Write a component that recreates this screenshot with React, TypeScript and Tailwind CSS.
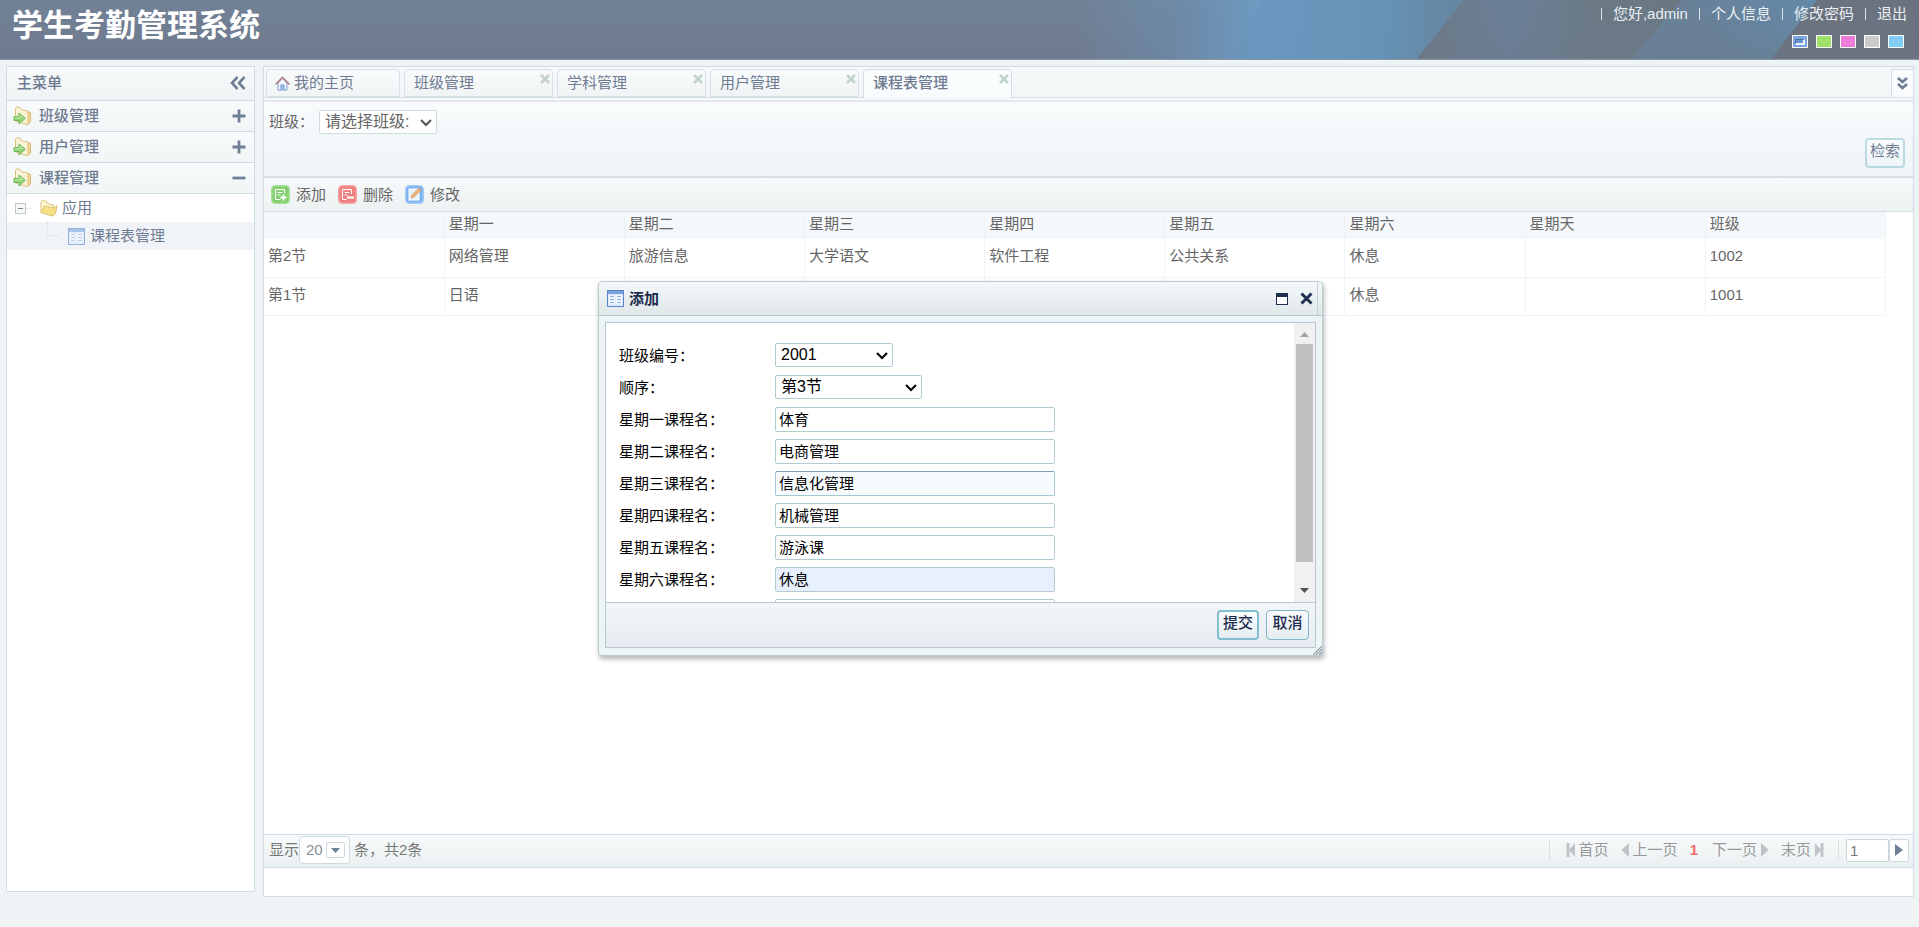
import React from "react";

const COLUMNS = ["", "星期一", "星期二", "星期三", "星期四", "星期五", "星期六", "星期天", "班级"];
const ROWS = [
  ["第2节", "网络管理", "旅游信息", "大学语文", "软件工程", "公共关系", "休息", "", "1002"],
  ["第1节", "日语", "", "", "", "", "休息", "", "1001"],
];
const FIELDS = [
  { id: "mon", label: "星期一课程名：", value: "体育", look: "bg-white border-[#b5cbd3]" },
  { id: "tue", label: "星期二课程名：", value: "电商管理", look: "bg-white border-[#b5cbd3]" },
  { id: "wed", label: "星期三课程名：", value: "信息化管理", look: "bg-[#f8fbfd] border-[#a3c8d6] border-t-[#7ba3b3]" },
  { id: "thu", label: "星期四课程名：", value: "机械管理", look: "bg-white border-[#b5cbd3]" },
  { id: "fri", label: "星期五课程名：", value: "游泳课", look: "bg-white border-[#b5cbd3]" },
  { id: "sat", label: "星期六课程名：", value: "休息", look: "bg-[#e8f0fe] border-[#b5cbd3]" },
];

function FolderArrow() {
  return (
    <svg width="20" height="20" viewBox="0 0 20 20" aria-hidden="true">
      <path d="M14 5.500l3.500 1v9.500l-3 2.500z" fill="#f3d999" stroke="#d9b878" />
      <path d="M2.500 2l1.500-1.300 3.500 1 1 2 6.500 1.300v13l-1.500.5L2.500 15z" fill="#fbf3d6" stroke="#dcc07f" />
      <path d="M1 10.500h5V7l6.300 5.300L6 18v-3.500H1z" fill="#8fd676" stroke="#6bb156" strokeWidth="0.900" />
      <path d="M2 11.800h5V9.500l3 2.500" fill="none" stroke="#c3edb3" />
    </svg>
  );
}

function FolderOpen() {
  return (
    <svg width="18" height="18" viewBox="0 0 18 18" aria-hidden="true">
      <path d="M1 13.500V2.500l1.500-1.200 4 1.200 1 2 6 1.500v3" fill="#fdf6cf" stroke="#dcc278" />
      <path d="M1 13.500l3.500-6.500 9.500 2 3-2.500-1.500 8-3 2.500z" fill="#f8e184" stroke="#dcc278" />
    </svg>
  );
}

function TableIcon({ faded = false }: { faded?: boolean }) {
  return (
    <svg width="17" height="17" viewBox="0 0 17 17" className={faded ? "shrink-0 opacity-60" : "shrink-0"} aria-hidden="true">
      <rect x="0.500" y="0.500" width="16" height="16" fill="#dceafb" stroke="#5b86c6" />
      <rect x="1" y="1" width="15" height="3" fill="#79a3e0" />
      <path d="M2 6.500h6M9 6.500h6M2 9.500h6M9 9.500h6M2 12.500h6M9 12.500h6" stroke="#fff" strokeWidth="2" />
      <path d="M3 6.500h4M10 6.500h4M3 9.500h4M10 9.500h4M3 12.500h4M10 12.500h4" stroke="#8fb2e2" />
    </svg>
  );
}

function ToolIcon({ kind }: { kind: "add" | "remove" | "edit" }) {
  const fill = kind === "add" ? "#83cf72" : kind === "remove" ? "#ef8080" : "#7db2ef";
  const edge = kind === "add" ? "#a5e096" : kind === "remove" ? "#f6a4a4" : "#a3caf6";
  return (
    <svg width="19" height="19" viewBox="0 0 19 19" aria-hidden="true">
      <rect x="0.750" y="0.750" width="17.500" height="17.500" rx="3.500" fill={fill} stroke={edge} strokeWidth="1.500" />
      {kind === "add" && (
        <>
          <path d="M13.500 8V4.500h-9v10h5" fill="none" stroke="#fff" />
          <path d="M6.500 7.500h5M6.500 10h3" stroke="#fff" />
          <path d="M9.500 12.500h6M12.500 9.500v6" stroke="#fff" strokeWidth="1.800" />
        </>
      )}
      {kind === "remove" && (
        <>
          <path d="M13.500 9V4.500h-9v10h4" fill="none" stroke="#fff" />
          <path d="M6.500 7.500h5M6.500 10h3" stroke="#fff" />
          <path d="M9 12.500h7" stroke="#fff" strokeWidth="2.200" />
        </>
      )}
      {kind === "edit" && (
        <>
          <rect x="4" y="4" width="10" height="11" fill="#e6f1fd" stroke="#fff" />
          <path d="M6 13l1-3 7-7 2 2-7 7z" fill="#f0b87c" stroke="#c98f5c" strokeWidth="0.700" />
        </>
      )}
    </svg>
  );
}

function HomeIcon() {
  return (
    <svg width="15" height="15" viewBox="0 0 15 15" aria-hidden="true">
      <path d="M3 7v7h9V7L7.500 2.500z" fill="#eef4fc" stroke="#7f9ccc" />
      <path d="M6 14V9h3v5" fill="#a9c8f0" stroke="#6d92cc" />
      <path d="M0.700 8.300L7.500 1.500l6.800 6.800" fill="none" stroke="#b9818a" strokeWidth="1.700" />
    </svg>
  );
}

function CloseX() {
  return (
    <svg width="10" height="10" viewBox="0 0 10 10" aria-hidden="true">
      <path d="M1 1l8 8M9 1L1 9" stroke="#c3d3d0" strokeWidth="2.700" />
    </svg>
  );
}

function Chevron({ color }: { color: string }) {
  return (
    <svg width="12" height="8" viewBox="0 0 12 8" className="pointer-events-none absolute right-[5px] top-[9px]" aria-hidden="true">
      <path d="M1 1l5 5 5-5" fill="none" stroke={color} strokeWidth="2" />
    </svg>
  );
}

function MenuGroup({ title, open = false }: { title: string; open?: boolean }) {
  return (
    <button className="flex h-[31px] w-full items-center border-b border-[#cfdde3] bg-linear-to-b from-[#f9fbfc] to-[#f1f5f6] pl-1.5 pr-2 font-medium text-[#6f7b91]">
      <FolderArrow />
      <span className="ml-1.5 grow text-left">{title}</span>
      <svg width="14" height="14" viewBox="0 0 14 14" aria-hidden="true">
        <path d={open ? "M0.500 7h13" : "M0.500 7h13M7 0.500v13"} stroke="#6f7f95" strokeWidth="2.800" />
      </svg>
    </button>
  );
}

function Tab({ title, active = false }: { title: string; active?: boolean }) {
  return (
    <div
      className={
        active
          ? "flex h-[31px] w-[149px] justify-between rounded-t-sm border border-b-0 border-[#d3e0e3] bg-[#f9fcfd] pl-[9px] pr-0.5 font-medium"
          : "flex h-7 w-[149px] justify-between rounded-t-sm border border-[#d6e2e5] bg-linear-to-b from-[#f9fbfc] to-[#eff4f5] pl-[9px] pr-0.5"
      }
    >
      <button className="h-[26px] leading-[26px]">{title}</button>
      <button aria-label={"关闭" + title} className="h-3.5 pt-1"><CloseX /></button>
    </div>
  );
}

function Arrow({ left = false, bar = false }: { left?: boolean; bar?: boolean }) {
  return (
    <svg width={bar ? 9 : 8} height="14" viewBox={bar ? "0 0 9 14" : "0 0 8 14"} className={left ? "rotate-180" : ""} aria-hidden="true">
      <path d={bar ? "M0 0l6 7-6 7zM5.500 0H8.500v14H5.500z" : "M0 0l7.500 7L0 14z"} fill="#c0c4c6" />
    </svg>
  );
}

function Header() {
  return (
    <header className="relative flex h-[60px] justify-between overflow-hidden border-b border-[#8896a6] bg-linear-to-b from-[#718196] to-[#6f7a8e]">
      <svg className="absolute right-0 top-0 h-full w-[920px]" viewBox="0 0 920 60" preserveAspectRatio="none" aria-hidden="true">
        <defs>
          <linearGradient id="glow" gradientUnits="userSpaceOnUse" x1="80" y1="0" x2="455" y2="40">
            <stop offset="0" stopColor="#6b9cc2" stopOpacity="0" />
            <stop offset="0.250" stopColor="#6b94b8" stopOpacity="0.450" />
            <stop offset="0.480" stopColor="#6d9bc2" />
            <stop offset="0.780" stopColor="#6796ba" />
            <stop offset="1" stopColor="#67849b" />
          </linearGradient>
          <linearGradient id="slate" x1="0" x2="1">
            <stop offset="0" stopColor="#6c7884" />
            <stop offset="0.350" stopColor="#6b8099" />
            <stop offset="0.650" stopColor="#6b7985" />
            <stop offset="1" stopColor="#6b7884" />
          </linearGradient>
          <linearGradient id="band" x1="0" x2="1">
            <stop offset="0" stopColor="#6a8399" />
            <stop offset="0.400" stopColor="#68819a" />
            <stop offset="1" stopColor="#648bab" />
          </linearGradient>
          <linearGradient id="shade" x1="0" x2="0" y1="0" y2="1">
            <stop offset="0" stopColor="#6b7b8c" stopOpacity="0" />
            <stop offset="1" stopColor="#6b7888" stopOpacity="0.400" />
          </linearGradient>
        </defs>
        <path d="M0 0H465L418 60H0z" fill="url(#glow)" />
        <path d="M264 0H465L418 60H232z" fill="#6491b4" opacity="0.250" />
        <path d="M465 0H684L632 60H418z" fill="url(#slate)" />
        <path d="M684 0H818L772 60H632z" fill="url(#band)" />
        <path d="M818 0H920V60H772z" fill="#6b717e" />
        <path d="M465 0H920V60H418z" fill="url(#shade)" />
      </svg>
      <h1 className="relative pl-3 pt-[3px] text-[31px] font-bold leading-[46px] text-white">学生考勤管理系统</h1>
      <div className="relative flex flex-col items-end pr-3 text-[#e9eef2]">
        <nav className="flex h-7 items-center gap-[11px]">
          <i className="h-3 w-px bg-[#dbe2e8]" />
          <span>您好,admin</span>
          <i className="h-3 w-px bg-[#dbe2e8]" />
          <a href="#profile">个人信息</a>
          <i className="h-3 w-px bg-[#dbe2e8]" />
          <a href="#password">修改密码</a>
          <i className="h-3 w-px bg-[#dbe2e8]" />
          <a href="#logout">退出</a>
        </nav>
        <div className="mr-[3px] flex gap-2 pt-[7px]">
          <button aria-label="蓝色" className="flex h-[13px] w-4 items-center justify-center border border-white bg-[#7ba3dd]">
            <i className="h-1.5 w-2.5 border border-b-2 border-r-2 border-[#eaf3ff] border-l-[#4c6ea8] border-t-[#4c6ea8] bg-[#6b93cf]" />
          </button>
          <button aria-label="绿色" className="h-[13px] w-4 border border-white bg-[#a1e069]" />
          <button aria-label="粉色" className="h-[13px] w-4 border border-white bg-[#ee7cd9]" />
          <button aria-label="灰色" className="h-[13px] w-4 border border-white bg-[#cbcbc9]" />
          <button aria-label="天蓝" className="h-[13px] w-4 border border-white bg-[#82cdf6]" />
        </div>
      </div>
    </header>
  );
}

function Sidebar() {
  return (
    <aside className="h-[826px] w-[249px] shrink-0 border border-[#d0dee2] bg-white">
      <div className="flex h-[34px] items-center justify-between border-b border-[#cfdde3] bg-linear-to-b from-[#f8fafb] to-[#eef3f4] pb-0.5 pl-2.5 pr-2 font-medium text-[#6f7b91]">
        主菜单
        <button aria-label="收起">
          <svg width="16" height="14" viewBox="0 0 16 14" aria-hidden="true">
            <path d="M7.500 1L2 7l5.500 6M14.500 1L9 7l5.500 6" fill="none" stroke="#6f7f95" strokeWidth="2.600" />
          </svg>
        </button>
      </div>
      <MenuGroup title="班级管理" />
      <MenuGroup title="用户管理" />
      <MenuGroup title="课程管理" open />
      <div className="flex h-7 items-center pl-2 text-[#6f7b91]">
        <button aria-label="折叠" className="flex size-[11px] items-center justify-center border border-[#c3c8cc] bg-[#f7f8f8]">
          <i className="h-px w-[5px] bg-[#777f88]" />
        </button>
        <i className="mr-2 w-1.5 border-t border-dotted border-[#d9dee1]" />
        <FolderOpen />
        <span className="ml-1">应用</span>
      </div>
      <div className="flex h-7 items-center bg-[#f0f4f9] pl-10 text-[#6f7b91]">
        <i className="mb-3.5 mr-[9px] h-3.5 w-3 border-b border-l border-dotted border-[#d9dee1]" />
        <TableIcon faded />
        <a href="#timetable" className="ml-[5px]">课程表管理</a>
      </div>
    </aside>
  );
}

function Pager() {
  return (
    <footer className="flex h-[34px] items-center justify-between border-y border-[#cfdde3] bg-linear-to-b from-[#f7fafb] to-[#eaf0f1] pb-0.5 pl-[5px] pr-1 text-[#777]">
      <div className="flex items-center">
        显示
        <button className="mr-1 flex h-7 w-[51px] items-center justify-between rounded-sm border border-[#d0dbe0] bg-white pl-1.5 pr-1 text-[#8b8f96]">
          20
          <span className="flex h-4 w-[19px] items-center justify-center rounded-xs border border-[#cfd9de]">
            <svg width="9" height="5" viewBox="0 0 9 5" aria-hidden="true"><path d="M0 0h9L4.500 5z" fill="#6f7f95" /></svg>
          </span>
        </button>
        条，共2条
      </div>
      <div className="flex items-center text-[#999]">
        <i className="mr-4 h-5 w-px bg-[#d8e0e2]" />
        <button className="flex items-center gap-1"><Arrow left bar />首页</button>
        <button className="ml-3 flex items-center gap-1"><Arrow left />上一页</button>
        <strong className="mx-3 text-[#f26a6a]">1</strong>
        <button className="ml-0.5 flex items-center gap-1">下一页<Arrow /></button>
        <button className="ml-3 flex items-center gap-1">末页<Arrow bar /></button>
        <i className="ml-3.5 mr-[7px] h-5 w-px bg-[#d8e0e2]" />
        <input aria-label="页码" defaultValue="1" className="h-[23px] w-[43px] rounded-xs border border-[#ccd3d6] bg-white px-[3px] text-[#777]" />
        <button aria-label="跳转" className="flex h-[23px] w-5 items-center justify-center rounded-xs border border-[#ccdbe0] bg-white">
          <svg width="8" height="12" viewBox="0 0 8 12" aria-hidden="true"><path d="M0 0l8 6-8 6z" fill="#6f7f95" /></svg>
        </button>
      </div>
    </footer>
  );
}

function Main() {
  return (
    <main className="flex h-[831px] min-w-0 grow flex-col border border-[#d0dee2] bg-white">
      <div className="flex h-[31px] items-start border-b border-[#d3e0e3] bg-linear-to-b from-[#f6f9fa] to-[#f2f6f7] pl-0.5 pt-0.5 text-[#6f7b91]">
        <div className="flex grow items-start gap-1">
          <button className="flex h-7 w-[134px] items-center gap-1 rounded-t-sm border border-[#d6e2e5] bg-linear-to-b from-[#f9fbfc] to-[#eff4f5] pl-2">
            <HomeIcon />我的主页
          </button>
          <Tab title="班级管理" />
          <Tab title="学科管理" />
          <Tab title="用户管理" />
          <Tab title="课程表管理" active />
        </div>
        <button aria-label="更多" className="flex h-7 w-[22px] items-center justify-center border-l border-t border-[#d3e0e3] bg-[#f9fbfc]">
          <svg width="11" height="13" viewBox="0 0 11 13" aria-hidden="true">
            <path d="M1 1l4.500 4L10 1M1 7l4.500 4L10 7" fill="none" stroke="#6f7f95" strokeWidth="2.700" />
          </svg>
        </button>
      </div>
      <div className="h-1 border-b-2 border-[#e2eaec] bg-[#f4f8f9]" />
      <section className="flex h-[74px] justify-between bg-linear-to-b from-[#f9fbfc] to-[#eff4f7] px-[5px] text-[#666]">
        <div className="flex h-10 items-center">
          <label htmlFor="class-filter" className="w-[50px]">班级：</label>
          <span className="relative">
            <select id="class-filter" className="block h-6 w-[118px] appearance-none rounded-xs border border-[#cfdde0] bg-white pl-[5px] text-base leading-5 text-[#666]">
              <option>请选择班级:</option>
            </select>
            <Chevron color="#555" />
          </span>
        </div>
        <button className="mr-[3px] mt-9 h-[30px] w-10 rounded-sm border-2 border-[#b9d9e3] bg-linear-to-b from-[#fafcfd] to-[#eef5f8] pb-1 text-[#6f7b91]">检索</button>
      </section>
      <div className="flex h-9 items-center gap-3 border-b border-t-2 border-[#d6e1e5] bg-linear-to-b from-[#f7fafa] to-[#ecf1f2] pl-[7px] text-[#666]">
        <button className="flex items-center gap-1.5"><ToolIcon kind="add" />添加</button>
        <button className="flex items-center gap-1.5"><ToolIcon kind="remove" />删除</button>
        <button className="flex items-center gap-1.5"><ToolIcon kind="edit" />修改</button>
      </div>
      <div className="grow">
        <table className="w-[1622px] table-fixed border-collapse text-left text-[#666]">
          <thead>
            <tr className="h-[27px] bg-[#f5f8fa]">
              {COLUMNS.map((c) => (
                <th key={c} className="border-r border-[#f0f3f4] px-1 pb-[3px] font-normal">{c}</th>
              ))}
            </tr>
          </thead>
          <tbody>
            {ROWS.map((row) => (
              <tr key={row[0]} className="h-[38px] border-b border-[#f1f4f5]">
                {row.map((cell, i) => (
                  <td key={COLUMNS[i]} className="border-r border-[#f1f4f5] px-1 pb-[3px]">{cell}</td>
                ))}
              </tr>
            ))}
          </tbody>
        </table>
      </div>
      <Pager />
      <div className="h-7" />
    </main>
  );
}

function Dialog() {
  return (
    <div className="pointer-events-none absolute inset-x-0 top-[281px] flex justify-center pl-0.5">
      <div role="dialog" aria-label="添加" className="pointer-events-auto relative w-[725px] rounded border border-[#b9c9cd] bg-[#edf4f6] shadow-[1px_3px_5px_rgba(0,0,0,0.3)]">
        <div className="flex h-[34px] items-center rounded-t border-b border-[#b5c9ce] bg-linear-to-b from-[#f3f8f9] to-[#e1e8ea] pl-2 pr-1 text-[#1d2c4d]">
          <TableIcon />
          <h2 className="ml-[5px] grow font-bold">添加</h2>
          <button aria-label="最大化" className="mr-3 h-3 w-3 border border-t-4 border-[#1f2f4f] bg-white" />
          <button aria-label="关闭">
            <svg width="13" height="13" viewBox="0 0 13 13" aria-hidden="true">
              <path d="M1.500 1.500l10 10M11.500 1.500l-10 10" stroke="#1f2f4f" strokeWidth="2.900" />
            </svg>
          </button>
          <i className="ml-1 h-full w-px bg-[#c3d2d6]" />
        </div>
        <div className="m-1.5 mb-[7px] border border-[#b9c6d0]">
          <div className="flex h-[279px] overflow-hidden bg-white text-black">
            <form className="grid grow auto-rows-[25px] grid-cols-[156px_1fr] content-start items-center gap-y-[7px] pl-[13px] pt-5">
              <label htmlFor="class-no">班级编号：</label>
              <span className="relative w-[118px] self-start">
                <select id="class-no" className="block h-6 w-full appearance-none rounded-xs border border-[#b5cbd3] bg-white pl-[5px] text-base leading-5">
                  <option>2001</option>
                </select>
                <Chevron color="#000" />
              </span>
              <label htmlFor="order">顺序：</label>
              <span className="relative w-[147px] self-start">
                <select id="order" className="block h-6 w-full appearance-none rounded-xs border border-[#b5cbd3] bg-white pl-[5px] text-base leading-5">
                  <option>第3节</option>
                </select>
                <Chevron color="#000" />
              </span>
              {FIELDS.map((f) => (
                <React.Fragment key={f.id}>
                  <label htmlFor={f.id}>{f.label}</label>
                  <input id={f.id} defaultValue={f.value} className={"h-[25px] w-[280px] rounded-xs border px-[3px] pb-0.5 " + f.look} />
                </React.Fragment>
              ))}
              <input id="sun" aria-label="星期天课程名" className="col-start-2 h-[25px] w-[280px] rounded-xs border border-[#b5cbd3] bg-white px-[3px] pb-0.5" />
            </form>
            <div className="flex w-[21px] shrink-0 flex-col items-center justify-between bg-[#f1f1f1] py-[9px]" aria-hidden="true">
              <svg width="9" height="5" viewBox="0 0 9 5"><path d="M0 5h9L4.500 0z" fill="#a3a3a3" /></svg>
              <div className="mb-auto mt-[7px] h-[218px] w-[17px] bg-[#c1c1c1]" />
              <svg width="9" height="5" viewBox="0 0 9 5"><path d="M0 0h9L4.500 5z" fill="#505050" /></svg>
            </div>
          </div>
          <div className="flex h-[45px] items-center justify-end gap-[7px] border-t border-[#b9c6d0] bg-linear-to-b from-[#f2f6f7] to-[#e7ecf2] pr-1.5 font-medium text-[#1d2c4d]">
            <button className="h-[30px] w-[42px] rounded-sm border-2 border-[#84bed1] bg-linear-to-b from-[#fafcfd] to-[#e4edf2] pb-1">提交</button>
            <button className="h-[30px] w-[43px] rounded-sm border border-[#84b5c8] bg-linear-to-b from-[#fafcfd] to-[#e4edf2] pb-1">取消</button>
          </div>
        </div>
        <svg className="absolute bottom-0 right-0" width="9" height="9" viewBox="0 0 9 9" aria-hidden="true">
          <path d="M0 9l9-9M3 9l6-6M6 9l3-3" stroke="#8f9ba0" strokeWidth="1.200" />
        </svg>
      </div>
    </div>
  );
}

export default function App() {
  return (
    <div className="relative min-h-screen overflow-hidden bg-[#eef4f5] font-['Liberation_Sans','Noto_Sans_CJK_SC',sans-serif] text-[15px] leading-5">
      <Header />
      <div className="flex gap-2 pl-1.5 pr-[5px] pt-1.5">
        <Sidebar />
        <Main />
      </div>
      <Dialog />
    </div>
  );
}
